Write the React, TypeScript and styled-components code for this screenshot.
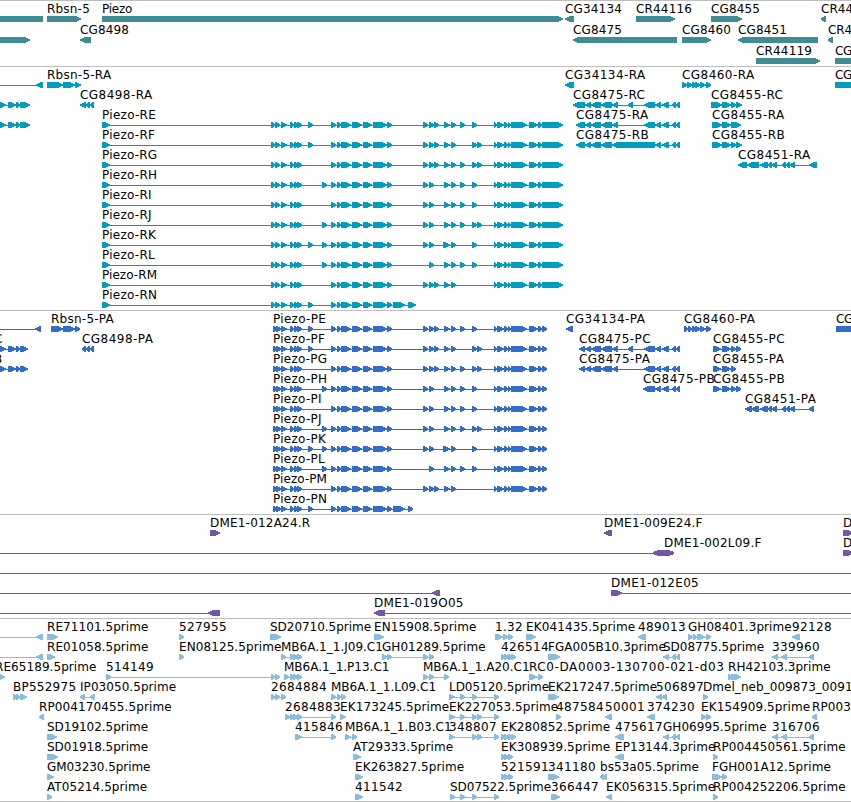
import React, { Component } from "react";
import styled, { createGlobalStyle } from "styled-components";

const GlobalStyle = createGlobalStyle`
    body {
        margin:0;
        background:#fff;
        overflow:hidden;
    }
`;

const Browser = styled.main`
    display:flex;
    flex-direction:column;
    width:851px;
    height:802px;
    overflow:hidden;
    color:#000;
    font:12px "DejaVu Sans", sans-serif;
`;

const TrackPanel = styled.section<{ $color: string, $gap: number }>`
    display:flex;
    flex-direction:column;
    border-top:1px solid #bebebe;
    padding-bottom:${p => p.$gap}px;
    color:${p => p.$color};
    &:last-child {
        border-bottom:1px solid #bebebe;
    }
`;

const LaneRow = styled.div<{ $height: number }>`
    display:grid;
    grid-template-columns:851px;
    grid-template-rows:15px 6px;
    height:${p => p.$height}px;
`;

const Label = styled.span<{ $start: number, $spacing: number }>`
    grid-area:1 / 1;
    justify-self:start;
    margin-left:${p => p.$start}px;
    color:#000;
    line-height:17px;
    letter-spacing:${p => p.$spacing}px;
    white-space:pre;
`;

const Glyphs = styled.svg`
    grid-area:2 / 1;
    display:block;
    width:851px;
    height:6px;
    fill:currentColor;
    shape-rendering:crispEdges;
`;

type Dir = "R" | "L" | "LR" | "-";
type Span = [number, number];

interface Feature {
    name: string;
    dir: Dir;
    spans: Span[];
    line?: Span;
    labelAt?: number;
    spacing?: number;
}

// "47-63 63-75" -> [[47, 63], [63, 75]], negative starts are written with a leading ~
const parse = (text: string): Span[] =>
    text.split(" ").filter(Boolean).map(part => part.split("-").map(n => Number(n.replace("~", "-"))) as Span);

const ft = (name: string, dir: Dir, spans: string, extra: Partial<Feature> = {}): Feature =>
    ({ name, dir, spans: parse(spans), ...extra });

const ADVANCE: Record<string, number> = {
    "-": 3.6, D: -1.5, M: -1.6, C: -0.4, G: -0.3, R: -0.3, P: -0.2, E: 0.2, e: -0.4, z: -0.3, o: -0.3, m: -0.5, p: -0.3,
};

const tracking = (name: string) => {
    const total = name.split("").reduce((sum, c) => sum + (/\d/.test(c) ? 0.37 : ADVANCE[c] ?? 0), 0);
    return Math.round(total / name.length * 100) / 100;
}

const shape = (dir: Dir, [a, b]: Span) => {
    const tip = Math.min(5, b - a - 1);
    if (dir === "R") return `${a},0 ${b - tip},0 ${b},2.2 ${b},3.8 ${b - tip},6 ${a},6`;
    if (dir === "L") return `${b},0 ${a + tip},0 ${a},2.2 ${a},3.8 ${a + tip},6 ${b},6`;
    if (dir === "LR") return `${a},2 ${a + 5},0 ${b - 5},0 ${b},2 ${b},4 ${b - 5},6 ${a + 5},6 ${a},4`;
    return `${a},0 ${b},0 ${b},6 ${a},6`;
}

const HEAD = "281-287 290-294 294-298 297-302";
const MIDDLE = "331-336 337-341 341-351 352-362 363-372 373-387 387-392";
const TAIL = "494-497 497-504 504-508 508-511 511-527 529-538";
const OPTIONAL: Record<string, string> = {
    a: "308-313", b: "322-327", c: "423-428", d: "429-434", e: "434-439", k: "443-450",
    f: "444-450", g: "451-456", h: "460-465", i: "472-477", j: "477-482",
};

// every Piezo isoform shares most exons, the letters pick the optional ones
const isoforms: [string, string][] = [
    ["E", "acdefghi"], ["F", "acdefgij"], ["G", "cdefghij"], ["H", "bcdfghi"], ["I", "cdfghi"],
    ["J", "bcdfghij"], ["K", "abcdkgi"], ["L", "bdfghi"], ["M", "cdefg"], ["N", "a"],
];

const piezo = (kind: "R" | "P", [letter, picks]: [string, string]): Feature => {
    const extra = picks.split("").map(p => OPTIONAL[p]).join(" ");
    const rna = kind === "R";
    const start = rna ? "102-110 271-275 275-280" : "273-277 276-281";
    let end = `${TAIL} ${rna ? "538-542 542-563" : "538-542 542-547"}`;
    if (letter === "N") end = rna ? "393-405 408-416" : "393-405 408-413";
    return ft(`Piezo-${kind}${letter}`, "R", `${start} ${HEAD} ${MIDDLE} ${extra} ${end}`);
}

const [rE, rF, rG, rH, rI, rJ, rK, rL, rM, rN] = isoforms.map(i => piezo("R", i));
const [pE, pF, pG, pH, pI, pJ, pK, pL, pM, pN] = isoforms.map(i => piezo("P", i));

const genes: Feature[][] = [
    [
        ft("", "-", "~5-43"), ft("Rbsn-5", "R", "47-81", { spacing: 0.2 }), ft("Piezo", "R", "102-563"),
        ft("CG34134", "L", "565-574"), ft("CR44116", "R", "636-675"), ft("CG8455", "R", "711-742"),
        ft("CR44", "L", "821-826"),
    ],
    [
        ft("", "R", "~5-30"), ft("CG8498", "L", "80-91"), ft("CG8475", "L", "573-677"),
        ft("CG8460", "R", "682-711"), ft("CG8451", "L", "738-818"), ft("CR4", "L", "828-833"),
    ],
    [ft("CR44119", "R", "756-820"), ft("CG", "-", "835-856")],
];

const transcripts: Feature[][] = [
    [
        ft("", "L", "36-43", { line: [0, 40] }), ft("Rbsn-5-RA", "R", "47-63 63-75 75-81", { spacing: 0.25 }),
        ft("CG34134-RA", "L", "565-574"), ft("CG8460-RA", "R", "682-687 687-692 692-696 695-700 700-706 706-711"),
        ft("CG", "-", "835-856"),
    ],
    [
        ft("", "R", "~2-6 8-16 16-20 20-30"), ft("CG8498-RA", "L", "80-86 86-90 90-94"),
        ft("CG8475-RC", "L", "573-585 585-591 591-601 601-612 612-618 628-633 644-655 655-661 662-669 672-676 676-680"),
        ft("CG8455-RC", "R", "711-722 722-731 731-736 736-742"),
    ],
    [
        ft("", "R", "~2-6 8-16 16-20 20-30"), rE,
        ft("CG8475-RA", "L", "576-585 585-591 591-601 601-612 612-618 644-655 655-661 662-669 672-676 676-680"),
        ft("CG8455-RA", "R", "712-722 722-731 731-741"),
    ],
    [
        rF,
        ft("CG8475-RB", "L", "576-585 585-591 591-601 601-612 612-655 655-661 662-669 672-676 676-680"),
        ft("CG8455-RB", "R", "712-722 722-731 731-736 736-742"),
    ],
    [rG, ft("CG8451-RA", "L", "738-747 747-759 760-768 768-772 772-777 782-786 786-790 790-795 809-817")],
    [rH], [rI], [rJ], [rK], [rL], [rM], [rN],
];

const proteins: Feature[][] = [
    [
        ft("", "L", "35-41", { line: [0, 38] }), ft("Rbsn-5-PA", "R", "51-63 63-75 75-80", { spacing: 0.25 }), pE,
        ft("CG34134-PA", "L", "566-573"), ft("CG8460-PA", "R", "684-688 688-692 692-696 695-700 700-706 706-711"),
        ft("CG", "-", "836-856"),
    ],
    [
        ft("C", "R", "~2-6 8-16 16-20 20-28", { labelAt: -6 }), ft("CG8498-PA", "L", "82-86 86-90 90-94"), pF,
        ft("CG8475-PC", "L", "579-585 585-591 591-601 601-612 612-618 628-633 644-655 655-661 662-669 672-676 676-680"),
        ft("CG8455-PC", "R", "713-721 722-731 731-736 736-741"),
    ],
    [
        ft("B", "R", "~2-6 8-16 16-20 20-28", { labelAt: -6 }), pG,
        ft("CG8475-PA", "L", "579-585 585-591 591-601 601-612 612-618 644-655 655-661 662-669 672-676 676-680"),
        ft("CG8455-PA", "R", "713-721 722-731 731-736"),
    ],
    [
        pH, ft("CG8475-PB", "L", "643-655 655-661 662-669 672-676 676-680"),
        ft("CG8455-PB", "R", "713-721 722-731 731-736 736-741"),
    ],
    [pI, ft("CG8451-PA", "L", "745-752 751-759 760-768 768-772 772-777 782-786 786-790 790-795 809-814")],
    [pJ], [pK], [pL], [pM], [pN],
];

const bacs: Feature[][] = [
    [ft("DME1-012A24.R", "R", "210-220"), ft("DME1-009E24.F", "L", "604-612"), ft("D", "R", "843-853")],
    [ft("DME1-002L09.F", "LR", "653-674", { line: [0, 655], labelAt: 664 }), ft("D", "R", "843-853")],
    [ft("", "-", "", { line: [0, 851] })],
    [ft("", "L", "432-440", { line: [0, 436] }), ft("DME1-012E05", "R", "611-622", { line: [615, 851] })],
    [ft("", "L", "208-220", { line: [0, 212] }), ft("DME1-019O05", "L", "374-385", { line: [380, 851] })],
];

const ests: Feature[][] = [
    [
        ft("", "L", "36-43", { line: [0, 40] }), ft("RE71101.5prime", "R", "47-58"), ft("527955", "R", "179-184"),
        ft("SD20710.5prime", "R", "270-281"), ft("EN15908.5prime", "R", "374-384"),
        ft("1.32", "R", "495-503 503-508 508-513"), ft("EK041435.5prime", "R", "526-536"), ft("489013", "L", "638-646"),
        ft("GH08401.3prime", "R", "688-693 693-697 697-705 706-711"), ft("92128", "L", "792-800"),
    ],
    [
        ft("", "L", "36-43", { line: [0, 40] }), ft("RE01058.5prime", "R", "47-55"), ft("EN08125.5prime", "R", "179-184"),
        ft("MB6A.1_1.J09.C1", "R", "281-286 290-294 293-298 297-302"),
        ft("GH01289.5prime", "R", "382-387 387-392 423-428 429-434"), ft("426514", "R", "501-505 504-509 508-512 511-516"),
        ft("FGA005B10.3prime", "R", "548-560"), ft("SD08775.5prime", "L", "663-669 672-676 676-680"),
        ft("339960", "L", "772-778 781-787 809-814"),
    ],
    [
        ft("RE65189.5prime", "R", "~2-5", { labelAt: -5 }), ft("514149", "R", "106-111 271-275 275-280"),
        ft("MB6A.1_1.P13.C1", "R", "284-289 290-294 293-298 297-302"),
        ft("MB6A.1_1.A20.C1", "R", "423-428 429-434 444-449"), ft("RC0-DA0003-130700-021-d03", "R", "529-537 538-543", { spacing: 0.6 }),
        ft("RH42103.3prime", "R", "728-732 731-741"),
    ],
    [
        ft("BP552975", "R", "13-17 16-20 20-27"), ft("IP03050.5prime", "L", "80-85 90-95"),
        ft("2684884", "R", "271-275 275-280 281-286"), ft("MB6A.1_1.L09.C1", "R", "331-336 337-341 341-346"),
        ft("LD05120.5prime", "R", "449-455 460-465 472-477 494-499"), ft("EK217247.5prime", "R", "548-559"),
        ft("506897", "L", "656-662 662-667"), ft("Dmel_neb_009873_0091", "R", "703-708"),
    ],
    [
        ft("RP004170455.5prime", "L", "39-44"), ft("2684883", "R", "285-290 290-294 293-298 297-302 331-336"),
        ft("EK173245.5prime", "R", "340-346"), ft("EK227053.5prime", "R", "449-455 460-465 472-477 477-482 494-499"),
        ft("487584", "R", "556-561"), ft("50001", "L", "605-612"), ft("374230", "L", "647-655"),
        ft("EK154909.5prime", "R", "701-706 706-711"), ft("RP003", "L", "812-817"),
    ],
    [
        ft("SD19102.5prime", "R", "47-57"), ft("415846", "R", "295-302 331-336"),
        ft("MB6A.1_1.B03.C1", "R", "345-351 352-357"), ft("348807", "R", "449-455 472-477 477-482 494-499"),
        ft("EK280852.5prime", "R", "501-505 504-509 508-512 511-516"), ft("475617", "L", "615-624"),
        ft("GH06995.5prime", "L", "663-669 672-676 676-680"), ft("316706", "L", "772-778 781-787 809-814"),
    ],
    [
        ft("SD01918.5prime", "R", "47-58"), ft("AT29333.5prime", "R", "353-361"),
        ft("EK308939.5prime", "R", "501-505 504-509 508-513"), ft("EP13144.3prime", "L", "615-624"),
        ft("RP004450561.5prime", "R", "713-718"),
    ],
    [
        ft("GM03230.5prime", "R", "47-54"), ft("EK263827.5prime", "R", "355-363"),
        ft("521591", "R", "501-505 504-509 508-513"), ft("341180", "R", "548-559"),
        ft("bs53a05.5prime", "L", "600-604 603-607"), ft("FGH001A12.5prime", "R", "712-722 722-727"),
    ],
    [
        ft("AT05214.5prime", "R", "47-52"), ft("411542", "R", "355-363"),
        ft("SD07522.5prime", "R", "450-455 460-465 472-477 494-499"), ft("366447", "R", "551-560"),
        ft("EK056315.5prime", "L", "606-612"), ft("RP004252206.5prime", "R", "713-718"),
    ],
];

const tracks = [
    { id: "gene", color: "#408c93", gap: 2, height: 21, lanes: genes },
    { id: "transcript", color: "#009dbf", gap: 3, height: 20, lanes: transcripts },
    { id: "protein", color: "#326dcd", gap: 3, height: 20, lanes: proteins },
    { id: "bac", color: "#7357a6", gap: 3, height: 20, lanes: bacs },
    { id: "est", color: "#89bddf", gap: 2, height: 20, lanes: ests },
];

class Lane extends Component<{ features: Feature[], height: number }> {
    labelStart = (f: Feature) => f.labelAt ?? f.spans[0][0];

    lineOf = (f: Feature): Span | null => {
        if (f.line) return f.line;
        if (f.spans.length < 2) return null;
        return [f.spans[0][0], Math.max(...f.spans.map(s => s[1])) - 1];
    }

    render() {
        const { features, height } = this.props;
        return <LaneRow $height={height}>
            {features.filter(f => f.name).map(f =>
                <Label key={f.name + this.labelStart(f)} $start={this.labelStart(f)} $spacing={f.spacing ?? tracking(f.name)}>{f.name}</Label>
            )}
            <Glyphs viewBox="0 0 851 6">
                {features.map((f, i) => {
                    const line = this.lineOf(f);
                    return <g key={i}>
                        {line && <rect x={line[0]} y={3} width={line[1] - line[0]} height={1} />}
                        {f.spans.map((s, n) => <polygon key={n} points={shape(f.dir, s)} />)}
                    </g>
                })}
            </Glyphs>
        </LaneRow>
    }
}

class App extends Component {
    render() {
        return <>
            <GlobalStyle />
            <Browser>
                {tracks.map(t => <TrackPanel key={t.id} $color={t.color} $gap={t.gap}>
                    {t.lanes.map((lane, i) => <Lane key={i} features={lane} height={t.height} />)}
                </TrackPanel>)}
            </Browser>
        </>
    }
}

export default App
